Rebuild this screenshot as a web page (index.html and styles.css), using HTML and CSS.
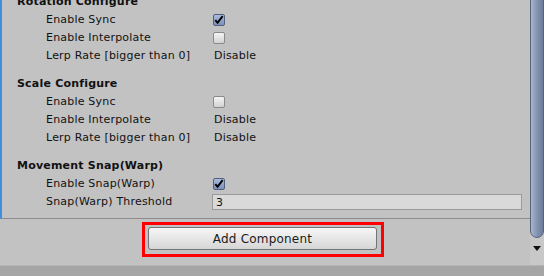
FILE: index.html
```html
<!DOCTYPE html>
<html lang="en">
<head>
    <meta charset="UTF-8">
    <meta name="viewport" content="width=device-width, initial-scale=1.0">
    <title>Inspector</title>
    <link rel="stylesheet" href="styles.css">
</head>
<body>
    <div class="main">
        <div class="content">
            <div class="component">
                <div class="section first">
                    <div class="section-title">Rotation Configure</div>
                    <div class="row">
                        <span class="label">Enable Sync</span>
                        <span class="value"><span class="checkbox checked"><svg viewBox="0 0 12 12"><polyline points="2.5,6.2 5,9 10.5,1.8" /></svg></span></span>
                    </div>
                    <div class="row">
                        <span class="label">Enable Interpolate</span>
                        <span class="value"><span class="checkbox"></span></span>
                    </div>
                    <div class="row">
                        <span class="label">Lerp Rate [bigger than 0]</span>
                        <span class="value">Disable</span>
                    </div>
                </div>
                <div class="section">
                    <div class="section-title">Scale Configure</div>
                    <div class="row">
                        <span class="label">Enable Sync</span>
                        <span class="value"><span class="checkbox"></span></span>
                    </div>
                    <div class="row">
                        <span class="label">Enable Interpolate</span>
                        <span class="value">Disable</span>
                    </div>
                    <div class="row">
                        <span class="label">Lerp Rate [bigger than 0]</span>
                        <span class="value">Disable</span>
                    </div>
                </div>
                <div class="section">
                    <div class="section-title">Movement Snap(Warp)</div>
                    <div class="row">
                        <span class="label">Enable Snap(Warp)</span>
                        <span class="value"><span class="checkbox checked"><svg viewBox="0 0 12 12"><polyline points="2.5,6.2 5,9 10.5,1.8" /></svg></span></span>
                    </div>
                    <div class="row">
                        <span class="label">Snap(Warp) Threshold</span>
                        <span class="value"><input class="text-field" type="text" value="3"></span>
                    </div>
                </div>
            </div>
            <div class="footer">
                <div class="highlight">
                    <button class="add-button">Add Component</button>
                </div>
            </div>
        </div>
        <div class="scrollbar">
            <div class="thumb"></div>
            <div class="arrow"></div>
        </div>
    </div>
    <div class="statusbar"></div>
</body>
</html>
```

FILE: styles.css
```css
body {
    margin: 0;
    width: 544px;
    height: 276px;
    overflow: hidden;
    display: flex;
    flex-direction: column;
    background-color: #c2c2c2;
    font-family: "DejaVu Sans", Verdana, sans-serif;
    font-size: 11px;
    letter-spacing: 0.2px;
    color: #111111;
}
.main {
    height: 265px;
    display: flex;
    flex-direction: row;
}
.content {
    flex: 1;
    display: flex;
    flex-direction: column;
}
.component {
    height: 218px;
    overflow: hidden;
    border-left: 2px solid #3f8fe0;
    border-bottom: 1px solid #8c8c8c;
    padding-right: 6px;
}
.section {
    margin-top: 10px;
}
.section.first {
    margin-top: -7px;
}
.section-title {
    height: 18px;
    line-height: 18px;
    padding-left: 15px;
    font-weight: bold;
}
.row {
    display: grid;
    grid-template-columns: 166px 1fr;
    height: 18px;
    line-height: 18px;
    padding-left: 44px;
}
.value {
    display: flex;
    align-items: center;
    padding-left: 2px;
}
.checkbox {
    width: 10px;
    height: 10px;
    border: 1px solid #8a8a8a;
    border-radius: 2px;
    background: linear-gradient(#f4f4f4, #d2d2d2);
    display: flex;
    margin-left: -1px;
}
.checkbox.checked {
    border-color: #50607e;
    background: linear-gradient(#a9badb, #7c92bb);
}
.checkbox svg {
    width: 12px;
    height: 12px;
    margin: -1px 0 0 -1px;
}
.checkbox polyline {
    fill: none;
    stroke: #000000;
    stroke-width: 2.2;
}
.text-field {
    width: 100%;
    height: 16px;
    box-sizing: border-box;
    margin: 0 0 0 -2px;
    padding: 0 3px;
    border: 1px solid #9a9a9a;
    background-color: #d9d9d9;
    font-family: "DejaVu Sans", Verdana, sans-serif;
    font-size: 11px;
    color: #111111;
    outline: none;
}
.footer {
    flex: 1;
    display: flex;
    justify-content: center;
    align-items: flex-start;
    padding: 3px 4px 0 0;
}
.highlight {
    border: 3px solid #ff0000;
    padding: 2px 4px 4px 3px;
}
.add-button {
    display: block;
    width: 229px;
    height: 23px;
    border: 1px solid #747474;
    border-radius: 3px;
    background: linear-gradient(#f6f6f6, #d6d6d6);
    font-family: "DejaVu Sans", Verdana, sans-serif;
    font-size: 12px;
    letter-spacing: 0.2px;
    color: #1a1a1a;
    padding: 0;
}
.scrollbar {
    width: 14px;
    display: flex;
    flex-direction: column;
    background-color: #c8c8c8;
}
.thumb {
    height: 248px;
    margin-top: -10px;
    box-sizing: border-box;
    border: 1px solid #55637b;
    border-radius: 0 0 7px 7px;
    background: linear-gradient(to right, #a7b6cd, #8394b1 50%, #6c7c98);
}
.arrow {
    width: 0;
    height: 0;
    margin: 8px auto 0;
    border-left: 4px solid transparent;
    border-right: 4px solid transparent;
    border-top: 5px solid #111111;
}
.statusbar {
    flex: 1;
    background-color: #a5a5a5;
    border-top: 1px solid #b4b4b4;
}
```
